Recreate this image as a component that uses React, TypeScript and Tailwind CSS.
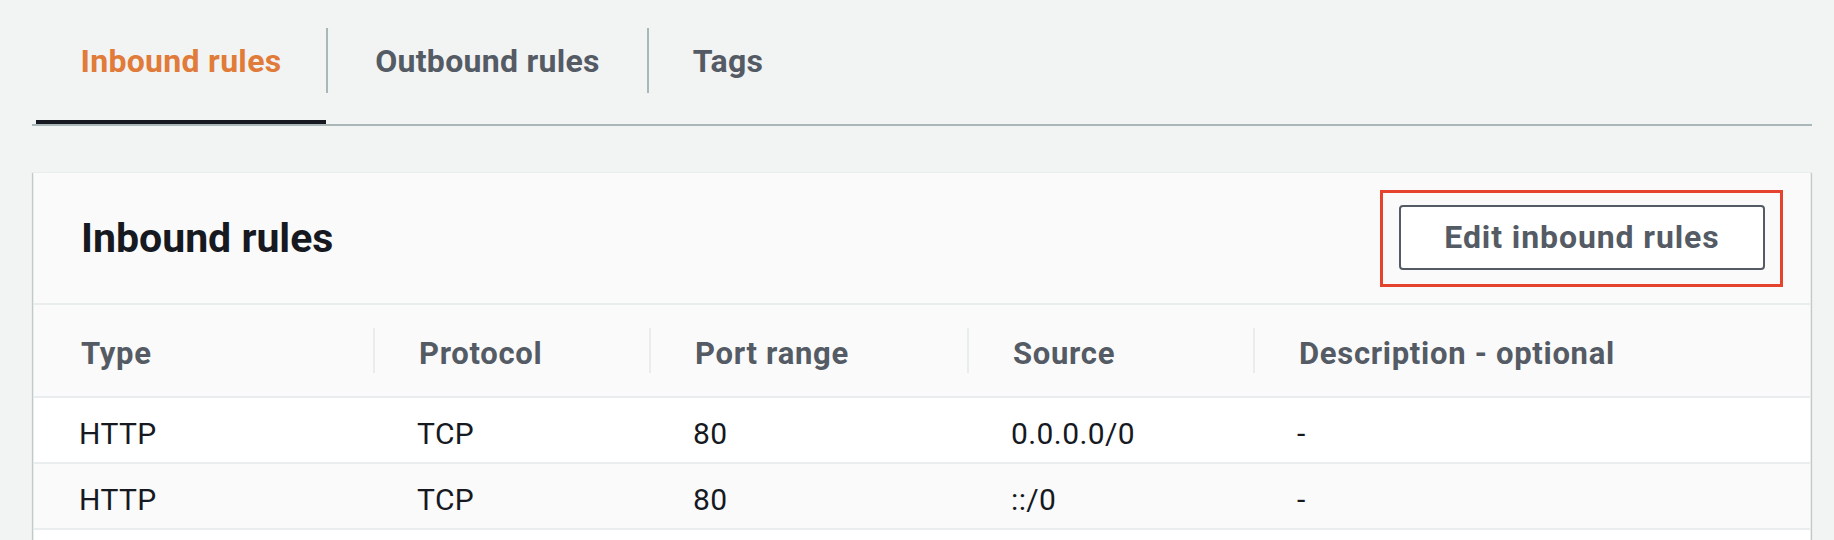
const font = { fontFamily: "Roboto, 'Liberation Sans', sans-serif" };

const tabs = [
  { label: "Inbound rules", width: "w-[290px]", active: true },
  { label: "Outbound rules", width: "w-[321px]", active: false },
  { label: "Tags", width: "w-[160px]", active: false },
];

const columns = ["Type", "Protocol", "Port range", "Source", "Description - optional"];

const rows = [
  ["HTTP", "TCP", "80", "0.0.0.0/0", "-"],
  ["HTTP", "TCP", "80", "::/0", "-"],
];

function Tabs() {
  return (
    <div className="ml-[32px] w-[1780px] border-b-2 border-[#aab7b8] flex pl-[4px]">
      {tabs.map((tab, i) => (
        <button key={tab.label} className={`${tab.width} flex flex-col pt-[28px]`}>
          <div
            className={
              i === 0
                ? "h-[65px] flex items-center justify-center"
                : "h-[65px] flex items-center justify-center border-l-2 border-[#aab7b8]"
            }
          >
            <span
              className={
                tab.active
                  ? "text-[32px] font-bold tracking-[0.3px] text-[#e07b39] leading-none"
                  : "text-[32px] font-bold tracking-[0.3px] text-[#545b64] leading-none"
              }
            >
              {tab.label}
            </span>
          </div>
          <div className={tab.active ? "mt-[27px] h-[4px] w-full bg-[#16191f]" : "mt-[27px] h-[4px] w-full"} />
        </button>
      ))}
    </div>
  );
}

function RulesPanel() {
  return (
    <div className="ml-[33px] mt-[46px] w-[1778px] bg-white border border-b-0 border-[#eaeded] shadow-[0_1px_1px_0_rgba(0,28,36,0.3),1px_1px_1px_0_rgba(0,28,36,0.15),-1px_1px_1px_0_rgba(0,28,36,0.15)]">
      {/* Header */}
      <div className="h-[132px] bg-[#fafafa] border-b-2 border-[#eaeded] flex items-center justify-between pl-[47px] pr-[27px]">
        <h2 className="text-[41px] font-bold text-[#16191f] leading-none">Inbound rules</h2>
        <div className="border-[3px] border-[#e5432e] pl-4 pr-[15px] pt-3 pb-[14px]">
          <button className="w-[366px] h-[65px] border-2 border-[#545b64] rounded-[4px] bg-white text-[32px] font-bold tracking-[0.9px] text-[#545b64] leading-none">
            Edit inbound rules
          </button>
        </div>
      </div>

      {/* Column headers */}
      <div className="grid grid-cols-[339px_276px_318px_286px_1fr] h-[93px] bg-[#fafafa] border-b-2 border-[#eaeded]">
        {columns.map((col, i) => (
          <div key={col} className="flex items-center pt-[6px]">
            {i > 0 && <span className="w-[2px] h-[45px] -mt-[6px] bg-[#eaeded]" />}
            <span
              className={
                i === 0
                  ? "ml-[47px] text-[31px] font-bold tracking-[0.7px] text-[#545b64] leading-none"
                  : "ml-[44px] text-[31px] font-bold tracking-[0.7px] text-[#545b64] leading-none"
              }
            >
              {col}
            </span>
          </div>
        ))}
      </div>

      {/* Rows */}
      {rows.map((row, r) => (
        <div
          key={r}
          className={
            r % 2 === 0
              ? "grid grid-cols-[339px_276px_318px_286px_1fr] h-[66px] bg-white border-b-2 border-[#eaeded]"
              : "grid grid-cols-[339px_276px_318px_286px_1fr] h-[66px] bg-[#fafafa] border-b-2 border-[#eaeded]"
          }
        >
          {row.map((cell, i) => (
            <div key={i} className={i === 0 ? "flex items-center pt-[7px] pl-[45px]" : "flex items-center pt-[7px] pl-[44px]"}>
              <span className="text-[30px] tracking-[0.4px] text-[#16191f] leading-none">{cell}</span>
            </div>
          ))}
        </div>
      ))}
      <div className="h-[40px] bg-white" />
    </div>
  );
}

export default function App() {
  return (
    <div className="w-full h-[540px] bg-[#f2f3f3] overflow-hidden" style={font}>
      <Tabs />
      <RulesPanel />
    </div>
  );
}
